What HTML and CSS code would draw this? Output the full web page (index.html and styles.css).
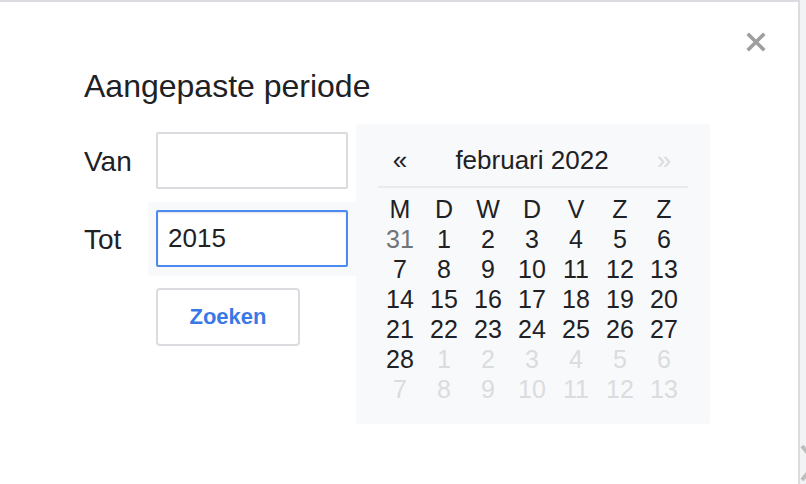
FILE: index.html
```html
<!DOCTYPE html>
<html lang="nl">
<head>
    <meta charset="UTF-8">
    <meta name="viewport" content="width=device-width, initial-scale=1.0">
    <title>Aangepaste periode</title>
    <link rel="stylesheet" href="styles.css">
</head>
<body>

    <div class="page">
        <svg class="backdrop-arrow" width="20" height="40" viewBox="0 0 20 40">
            <path d="M2 3 L16 20 L2 37" fill="none" stroke="#bdbdbd" stroke-width="4"/>
        </svg>

        <div class="dialog">
            <button class="close-btn" aria-label="Sluiten">
                <svg width="20" height="20" viewBox="0 0 20 20">
                    <path d="M3 3 L17 17 M17 3 L3 17" stroke="#9e9e9e" stroke-width="3.6" stroke-linecap="square"/>
                </svg>
            </button>

            <h1 class="title">Aangepaste periode</h1>

            <div class="content">
                <div class="form">
                    <div class="field">
                        <label for="from">Van</label>
                        <div class="input-wrap">
                            <input type="text" id="from">
                        </div>
                    </div>
                    <div class="field active">
                        <label for="to">Tot</label>
                        <div class="input-wrap">
                            <input type="text" id="to" value="2015">
                        </div>
                    </div>
                    <button class="search-btn">Zoeken</button>
                </div>

                <div class="calendar">
                    <div class="cal-head">
                        <span class="nav">&laquo;</span>
                        <span class="month">februari 2022</span>
                        <span class="nav disabled">&raquo;</span>
                    </div>
                    <div class="cal-sep"></div>
                    <div class="cal-grid">
                        <span>M</span><span>D</span><span>W</span><span>D</span><span>V</span><span>Z</span><span>Z</span>
                        <span class="prev">31</span><span>1</span><span>2</span><span>3</span><span>4</span><span>5</span><span>6</span>
                        <span>7</span><span>8</span><span>9</span><span>10</span><span>11</span><span>12</span><span>13</span>
                        <span>14</span><span>15</span><span>16</span><span>17</span><span>18</span><span>19</span><span>20</span>
                        <span>21</span><span>22</span><span>23</span><span>24</span><span>25</span><span>26</span><span>27</span>
                        <span>28</span><span class="next">1</span><span class="next">2</span><span class="next">3</span><span class="next">4</span><span class="next">5</span><span class="next">6</span>
                        <span class="next">7</span><span class="next">8</span><span class="next">9</span><span class="next">10</span><span class="next">11</span><span class="next">12</span><span class="next">13</span>
                    </div>
                </div>
            </div>
        </div>
    </div>

</body>
</html>
```

FILE: styles.css
```css
body {
    margin: 0;
    font-family: "Liberation Sans", Arial, sans-serif;
    color: #202124;
    background-color: #f1f3f4;
}
.page {
    position: relative;
    height: 484px;
    overflow: hidden;
}
.backdrop-arrow {
    position: absolute;
    left: 800px;
    top: 443px;
}
.dialog {
    position: relative;
    box-sizing: border-box;
    width: 800px;
    height: 484px;
    padding: 66px 0 0 84px;
    background: white;
    border-top: 2px solid #dadce0;
    border-right: 2px solid #dadce0;
}
.close-btn {
    position: absolute;
    top: 30px;
    right: 32px;
    width: 20px;
    height: 20px;
    padding: 0;
    border: none;
    background: none;
    cursor: pointer;
}
.close-btn svg {
    display: block;
}
.title {
    margin: 0;
    font-size: 32px;
    font-weight: normal;
    line-height: 36px;
}
.content {
    display: flex;
    align-items: flex-start;
    margin-top: 20px;
}
.form {
    display: flex;
    flex-direction: column;
    gap: 4px;
}
.field {
    display: flex;
    align-items: center;
}
.field label {
    width: 64px;
    padding-top: 2px;
    font-size: 28px;
    line-height: 30px;
}
.input-wrap {
    padding: 8px 8px 9px;
    border-radius: 4px 0 0 4px;
}
.field.active .input-wrap {
    background-color: #f8f9fa;
}
input {
    display: block;
    box-sizing: border-box;
    width: 192px;
    height: 57px;
    padding: 0 10px;
    border: 2px solid #dadce0;
    border-radius: 2px;
    font-family: inherit;
    font-size: 26px;
    color: #202124;
    background: white;
    outline: none;
}
.field.active input {
    border-color: #4d8af0;
    box-shadow: inset 0 1px 2px rgba(0, 0, 0, 0.12);
}
.search-btn {
    box-sizing: border-box;
    width: 144px;
    height: 58px;
    margin: 8px 0 0 72px;
    border: 2px solid #dadce0;
    border-radius: 4px;
    background: white;
    font-family: inherit;
    font-size: 22px;
    font-weight: bold;
    color: #3b78e7;
    cursor: pointer;
}
.calendar {
    box-sizing: border-box;
    width: 354px;
    padding: 18px 24px 20px 22px;
    background-color: #f8f9fa;
    border-radius: 4px;
}
.cal-head {
    display: grid;
    grid-template-columns: 44px 1fr 44px;
    font-size: 26px;
    line-height: 36px;
    text-align: center;
}
.nav.disabled {
    color: #dadce0;
}
.cal-sep {
    height: 2px;
    margin: 8px -2px 6px 0;
    background-color: #e8eaed;
}
.cal-grid {
    display: grid;
    grid-template-columns: repeat(7, 44px);
    font-size: 25px;
    line-height: 30px;
    text-align: center;
}
.cal-grid .prev {
    color: #70757a;
}
.cal-grid .next {
    color: #dadce0;
}
```
